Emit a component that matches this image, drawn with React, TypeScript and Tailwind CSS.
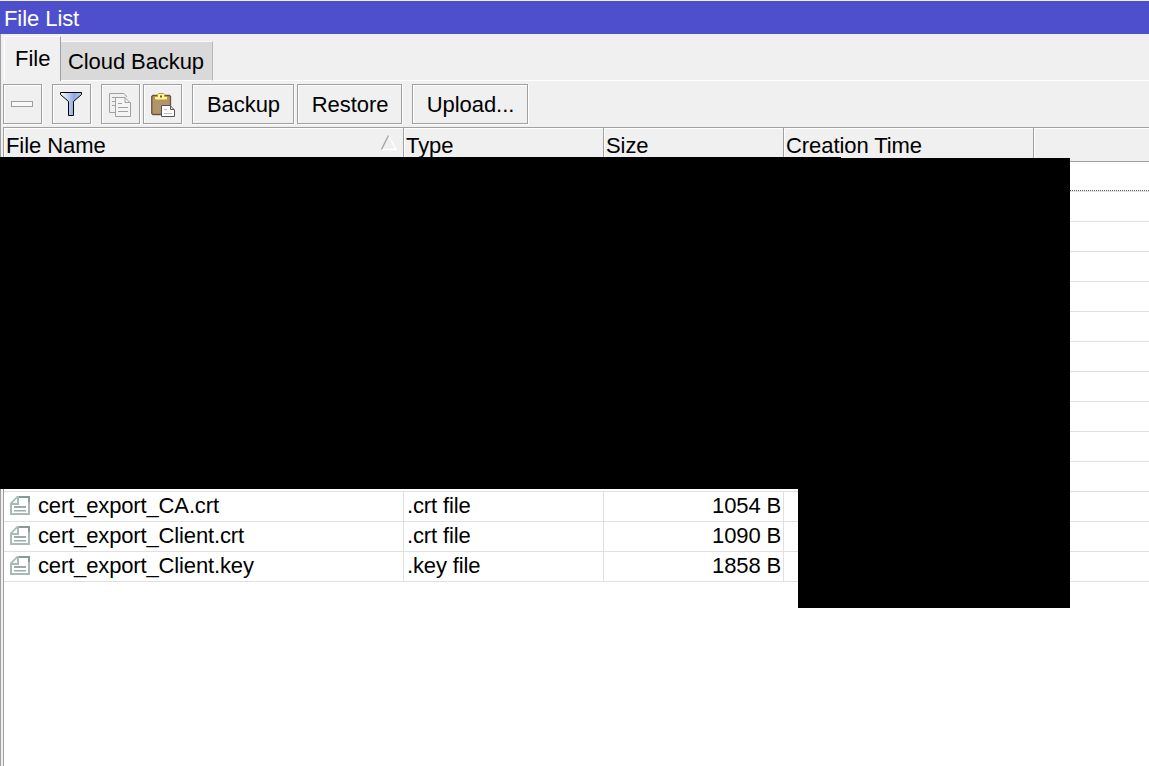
import React from "react";

const files = [
  ["cert_export_CA.crt", ".crt file", "1054 B"],
  ["cert_export_Client.crt", ".crt file", "1090 B"],
  ["cert_export_Client.key", ".key file", "1858 B"],
];

function FileIcon() {
  return (
    <svg width="20" height="19" viewBox="0 0 20 19" className="ml-1.5 mr-2 shrink-0">
      <path d="M7 0H20V19H0V7Z" fill="#a9b9b6" />
      <path d="M9 2H18V17H2V9H9Z" fill="#fff" />
      <path d="M7 2.5V7H2.5Z" fill="#fff" />
      <path d="M9 0H20V2H9ZM18 2H20V6H18Z" fill="#869a97" />
      <path d="M4 10H16V12H4ZM4 14H16V15.5H4Z" fill="#9cacaa" />
    </svg>
  );
}

function ToolButton({ className, children }: { className: string; children: React.ReactNode }) {
  return (
    <button
      className={
        "flex h-10 shrink-0 items-center justify-center border border-[#a0a0a0] bg-[#f0f0f0] tracking-[-0.05px] shadow-[inset_1px_1px_0_#fff,1px_1px_0_#fff] " +
        className
      }
    >
      {children}
    </button>
  );
}

const headCell = "flex h-[33px] shrink-0 items-start border-r border-[#a0a0a0] pl-0.5 pt-[5px] leading-[25px] tracking-[-0.07px] shadow-[inset_1px_1px_0_#fff]";

export default function App() {
  return (
    <div className="relative flex h-[766px] w-[1149px] flex-col overflow-hidden bg-[#f0f0f0] font-['Liberation_Sans',Arial,sans-serif] text-[22px] text-black">
      <div className="h-px shrink-0 bg-[#f0f0f0]" />
      <header className="h-[33px] shrink-0 bg-[#4e4fcc] pl-1 leading-[35px] tracking-[-0.07px] text-white">File List</header>
      <div className="flex min-h-0 flex-1 flex-col border-l border-[#a0a0a0]">
        <nav className="flex h-[47px] shrink-0 items-end pl-[3px]">
          <div className="h-[45px] w-[57px] border-l border-r border-t border-l-white border-r-[#a0a0a0] border-t-white pl-2.5 leading-[44px]">
            File
          </div>
          <div className="h-[40px] w-[152px] border-b border-r border-t border-b-white border-r-[#b8b8b8] border-t-[#f8f8f8] bg-[#d9d9d9] pl-[7px] leading-[40px] tracking-[-0.08px]">
            Cloud Backup
          </div>
          <div className="h-px flex-1 bg-white" />
        </nav>
        <div className="flex h-[46px] shrink-0 items-start pl-0.5 pt-[3px]">
          <ToolButton className="w-[39px] pr-0.5">
            <svg width="22" height="6" viewBox="0 0 22 6">
              <rect x="0.5" y="0.5" width="21" height="5" fill="#f8f8f8" stroke="#a0a0a0" />
            </svg>
          </ToolButton>
          <ToolButton className="ml-2.5 w-[39px] pr-0.5">
            <svg width="22" height="24" viewBox="0 0 22 24">
              <defs>
                <linearGradient id="funnel">
                  <stop offset="0.1" stopColor="#eef3ff" />
                  <stop offset="0.65" stopColor="#8fa8e0" />
                  <stop offset="1" stopColor="#b8caf4" />
                </linearGradient>
              </defs>
              <path d="M.5.5H21.5V2.5L13.5 9.5V23.5H8.5V9.5L.5 2.5Z" fill="url(#funnel)" stroke="#000" />
            </svg>
          </ToolButton>
          <ToolButton className="ml-2.5 w-[39px] pr-0.5 pt-px">
            <svg width="22" height="24" viewBox="0 0 22 24" fill="none" stroke="#a0a0a0">
              <path d="M6 19.5H.5V.5H15L18 4M3 4.5H7M3 8.5H6M3 12.5H6" />
              <path d="M6.5 4.5H16L21.5 10V23.5H6.5ZM16 4.5V9.5H21.5M9 10.5H13M9 14.5H19M9 18.5H19" fill="#f4f4f4" />
            </svg>
          </ToolButton>
          <ToolButton className="ml-[3px] w-[39px] pt-px">
            <svg width="24" height="24" viewBox="0 0 24 24">
              <path d="M.75 3.5L2 2.5H18.5L19.5 3.5V20.5L18.5 21.5H2L.75 20.5Z" fill="#b3936a" stroke="#685443" strokeWidth="1.3" />
              <path d="M3.5 3.5H6.5V1.5L7.5.5H12.5L13.5 1.5V3.5H16.5V6L15.5 7H4.5L3.5 6Z" fill="#fff3a0" stroke="#b69b2c" />
              <path d="M9 2.5H11V4.5H9Z" fill="#6c6030" />
              <path d="M10.5 12.5H19L23.5 17V23.5H10.5Z" fill="#fff" stroke="#555" />
              <path d="M19.5 13V16.5H23" fill="none" stroke="#555" />
              <path d="M13 16.5H16M13 20.5H21" fill="none" stroke="#bbb" />
            </svg>
          </ToolButton>
          <ToolButton className="ml-2.5 w-[102px] pl-px">Backup</ToolButton>
          <ToolButton className="ml-[3px] w-[105px] pl-px">Restore</ToolButton>
          <ToolButton className="ml-2.5 w-[116px] pl-px">Upload...</ToolButton>
        </div>
        <main className="ml-0.5 min-h-0 flex-1 border-l border-t border-[#a0a0a0] bg-white">
          <div className="flex h-[34px] border-b border-[#a0a0a0] bg-[#f0f0f0]">
            <div className={headCell + " w-[400px] justify-between pr-1.5"}>
              File Name
              <svg width="16" height="16" viewBox="0 0 16 16" className="mt-[2px]">
                <path d="M7.5.5L15 14.5H1" stroke="#fff" fill="none" strokeWidth="1.3" />
                <path d="M.5 14.5L7.5.5" stroke="#a0a0a0" strokeWidth="1.3" />
              </svg>
            </div>
            <div className={headCell + " w-[200px]"}>Type</div>
            <div className={headCell + " w-[180px]"}>Size</div>
            <div className={headCell + " w-[250px]"}>Creation Time</div>
            <div className="flex-1 shadow-[inset_1px_1px_0_#fff]" />
          </div>
          <div className="h-[30px] border-b border-[#e0e0e0]">
            <div className="h-[29px] border-b border-dotted border-[#606060]" />
          </div>
          {Array.from({ length: 10 }, (_, i) => (
            <div key={i} className="h-[30px] border-b border-[#e0e0e0]" />
          ))}
          {files.map(([name, type, size]) => (
            <div key={name} className="flex h-[30px] border-b border-[#e0e0e0] leading-[27px] tracking-[-0.14px]">
              <div className="flex w-[400px] items-center border-r border-[#e0e0e0] pb-0.5">
                <FileIcon />
                {name}
              </div>
              <div className="w-[200px] border-r border-[#e0e0e0] pl-[3px]">{type}</div>
              <div className="w-[180px] border-r border-[#e0e0e0] pr-0.5 text-right">{size}</div>
            </div>
          ))}
        </main>
      </div>
      <div className="absolute left-0 top-[157px] h-[332px] w-[841px] bg-black" />
      <div className="absolute left-[798px] top-[158px] h-[450px] w-[272px] bg-black" />
    </div>
  );
}
